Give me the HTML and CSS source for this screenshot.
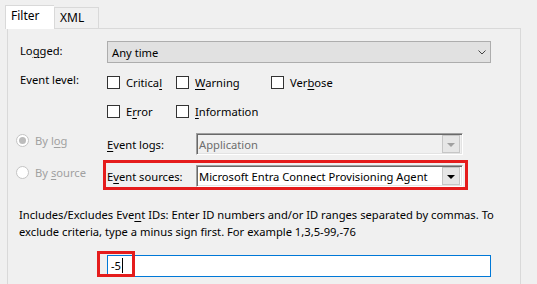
FILE: index.html
```html
<!DOCTYPE html>
<html lang="en">
<head>
  <meta charset="UTF-8" />
  <title>Filter</title>
  <link rel="stylesheet" href="styles.css">
</head>
<body>
  <div class="dialog">
    <div class="tabs">
      <div class="tab tab-active">Filter</div>
      <div class="tab">XML</div>
    </div>

    <div class="panel">
      <div class="row row-logged">
        <span class="label">Lo<u>g</u>ged:</span>
        <div class="select">
          <span>Any time</span>
          <svg class="chevron" width="8" height="5" viewBox="0 0 8 5">
            <path d="M0.5 0.5 L4 4 L7.5 0.5" fill="none" stroke="#444" stroke-width="1"/>
          </svg>
        </div>
      </div>

      <div class="row row-level">
        <span class="label">Event level:</span>
        <div class="checks">
          <label class="check"><span class="box"></span><span>Critica<u>l</u></span></label>
          <label class="check"><span class="box"></span><span><u>W</u>arning</span></label>
          <label class="check"><span class="box"></span><span>Ver<u>b</u>ose</span></label>
          <label class="check"><span class="box"></span><span>E<u>r</u>ror</span></label>
          <label class="check"><span class="box"></span><span><u>I</u>nformation</span></label>
        </div>
      </div>

      <div class="row row-log">
        <label class="radio disabled"><span class="dot checked"></span><span>By l<u>o</u>g</span></label>
        <div class="source-line">
          <span class="combo-label"><u>E</u>vent logs:</span>
          <div class="combo combo-disabled">
            <span>Application</span>
            <span class="combo-btn"><span class="tri"></span></span>
          </div>
        </div>
      </div>

      <div class="row row-source">
        <label class="radio disabled"><span class="dot"></span><span>By <u>s</u>ource</span></label>
        <div class="source-line highlight">
          <span class="combo-label">E<u>v</u>ent sources:</span>
          <div class="combo">
            <span>Microsoft Entra Connect Provisioning Agent</span>
            <span class="combo-btn"><span class="tri"></span></span>
          </div>
        </div>
      </div>

      <p class="hint">Includes/Excludes Eve<u>n</u>t IDs: Enter ID numbers and/or ID ranges separated by commas. To<br>exclude criteria, type a minus sign first. For example 1,3,5-99,-76</p>

      <div class="ids">
        <div class="ids-input">-5<span class="caret"></span></div>
        <div class="ids-mark"></div>
      </div>
    </div>
  </div>
</body>
</html>
```

FILE: styles.css
```css
html, body {
  margin: 0;
  padding: 0;
  height: 100%;
  overflow: hidden;
}

body {
  background-color: #f0f0f0;
  font-family: "Noto Sans", "Open Sans", sans-serif;
  font-size: 11.2px;
  color: #000;
}

u {
  text-decoration-thickness: 1px;
  text-underline-offset: 2px;
}

.dialog {
  padding: 5px 0 0 5px;
}

.tabs {
  display: flex;
  align-items: flex-end;
  height: 23px;
}

.tab {
  box-sizing: border-box;
  height: 21px;
  padding: 0 5px;
  border: 1px solid #d9d9d9;
  border-bottom: none;
  line-height: 20px;
  font-size: 12px;
  background-color: #f0f0f0;
}

.tab-active {
  position: relative;
  z-index: 1;
  height: 24px;
  width: 49px;
  margin-bottom: -1px;
  padding-left: 5px;
  line-height: 19px;
  background-color: #fff;
  border-right: none;
}

.tab-active + .tab {
  width: 45px;
}

.panel {
  box-sizing: border-box;
  width: 514px;
  height: 270px;
  margin-left: 2px;
  padding: 12px 0 0 8px;
  border: 1px solid #d9d9d9;
  background-color: #f0f0f0;
}

.row {
  display: grid;
  grid-template-columns: 91px 1fr;
  align-items: start;
}

.label {
  padding-left: 4px;
  line-height: 16px;
}

.row-logged .label {
  padding-top: 2px;
}

.select {
  box-sizing: border-box;
  width: 384px;
  height: 22px;
  display: flex;
  align-items: center;
  justify-content: space-between;
  padding: 0 4px;
  border: 1px solid #adadad;
  background-color: #e1e1e1;
}

.row-level {
  margin-top: 13px;
}

.row-level .label {
  margin-top: -4px;
}

.checks {
  display: grid;
  grid-template-columns: 69px 95px auto;
  row-gap: 16px;
}

.check {
  display: flex;
  align-items: center;
  gap: 6px;
  height: 13px;
  line-height: 13px;
}

.box {
  box-sizing: border-box;
  width: 13px;
  height: 13px;
  border: 1px solid #333;
  background-color: #fff;
}

.check:nth-child(4) {
  grid-column: 1;
}

.row-log {
  margin-top: 15px;
}

.radio {
  display: flex;
  align-items: center;
  gap: 6px;
  height: 14px;
}

.disabled {
  color: #a0a0a0;
}

.dot {
  box-sizing: border-box;
  width: 13px;
  height: 13px;
  border: 1px solid #c4c4c4;
  border-radius: 50%;
  background-color: #fff;
  display: flex;
  align-items: center;
  justify-content: center;
}

.dot.checked::after {
  content: "";
  width: 7px;
  height: 7px;
  border-radius: 50%;
  background-color: #bcbcbc;
}

.source-line {
  display: flex;
  align-items: center;
}

.combo-label {
  width: 89px;
}

.combo {
  box-sizing: border-box;
  width: 267px;
  height: 22px;
  display: flex;
  align-items: center;
  justify-content: space-between;
  padding: 0 1px;
  border-top: 1px solid #a0a0a0;
  border-left: 1px solid #a0a0a0;
  border-right: 1px solid #fff;
  border-bottom: 1px solid #fff;
  box-shadow: inset 1px 1px #696969, inset -1px -1px #e3e3e3;
  background-color: #fff;
  white-space: nowrap;
}

.combo > span:first-child {
  padding-left: 1px;
}

.combo-disabled {
  background-color: #f0f0f0;
  color: #6d6d6d;
}

.combo-btn {
  box-sizing: border-box;
  flex-shrink: 0;
  width: 18px;
  height: 18px;
  margin-right: 1px;
  display: flex;
  align-items: center;
  justify-content: center;
  border: 1px solid #c6c6c6;
  background-color: #e6e6e6;
}

.tri {
  width: 0;
  height: 0;
  margin-top: 1px;
  border-left: 4px solid transparent;
  border-right: 4px solid transparent;
  border-top: 4px solid #000;
}

.combo-disabled .tri {
  border-top-color: #a0a0a0;
}

.row-source {
  margin-top: 5px;
}

.row-source .radio {
  margin-top: 5px;
}

.highlight {
  margin-left: -4px;
  padding: 2px 2px 0 1px;
  border: 3px solid #e51c1c;
  justify-self: start;
}

.hint {
  margin: 16px 0 0 3px;
  line-height: 17px;
  white-space: nowrap;
}

.ids {
  position: relative;
  margin: 15px 0 0 91px;
}

.ids-input {
  box-sizing: border-box;
  width: 384px;
  height: 22px;
  padding-left: 3px;
  line-height: 20px;
  border: 1px solid #0078d7;
  background-color: #fff;
}

.caret {
  display: inline-block;
  width: 1px;
  height: 15px;
  margin-left: 1px;
  vertical-align: -3px;
  background-color: #000;
}

.ids-mark {
  position: absolute;
  left: -10px;
  top: -4px;
  width: 32px;
  height: 20px;
  border: 3px solid #e51c1c;
}
```
